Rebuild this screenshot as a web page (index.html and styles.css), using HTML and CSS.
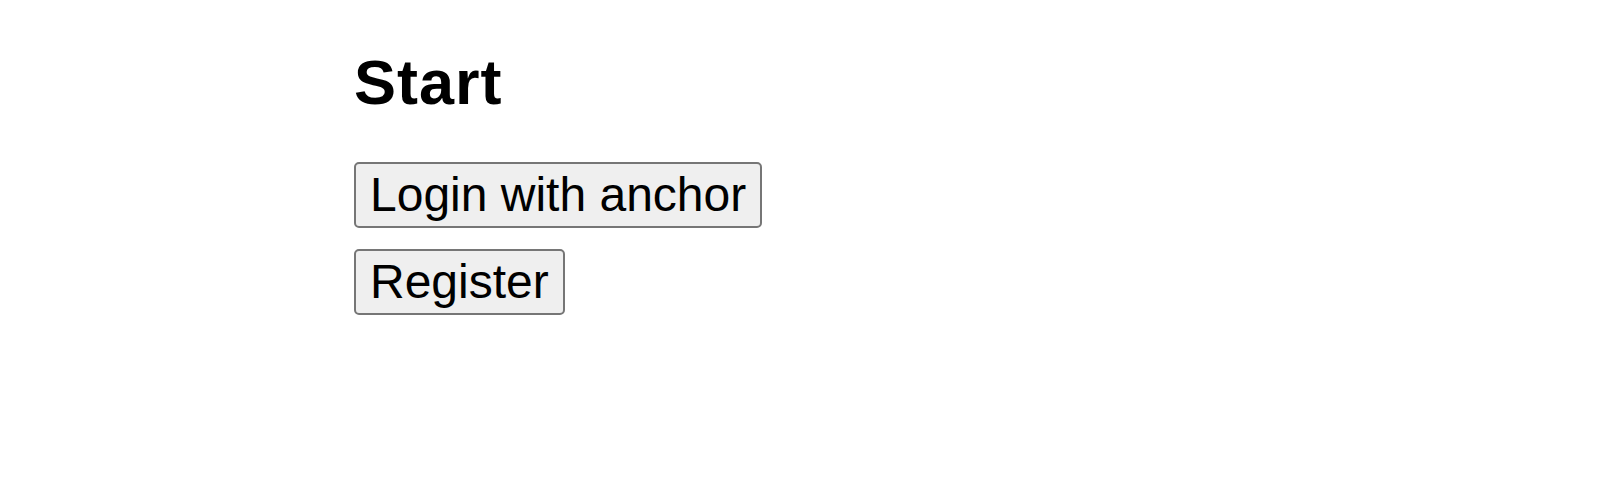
FILE: index.html
```html
<!DOCTYPE html>
<html>
<head>
<meta charset="utf-8">
<link rel="stylesheet" href="styles.css">
</head>
<body>
<main class="page">
  <h1 class="title">Start</h1>
  <div class="actions">
    <button class="btn" type="button">Login with anchor</button>
    <button class="btn" type="button">Register</button>
  </div>
</main>
</body>
</html>
```

FILE: styles.css
```css
html, body {
  margin: 0;
  padding: 0;
  background: #ffffff;
}
body {
  font-family: "Liberation Sans", Arial, sans-serif;
  color: #000;
}
.page {
  width: 902px;
  margin: 0 auto;
  padding-top: 46px;
}
.title {
  margin: 0;
  font-size: 63px;
  font-weight: 700;
  line-height: 72px;
  letter-spacing: 1px;
}
.actions {
  display: flex;
  flex-direction: column;
  align-items: flex-start;
  gap: 21px;
  margin-top: 44px;
}
.btn {
  font-family: "Liberation Sans", Arial, sans-serif;
  font-size: 48px;
  line-height: 56px;
  padding: 3px 14px;
  border: 2px solid #767676;
  border-radius: 5px;
  background: #efefef;
  color: #000;
}
```
